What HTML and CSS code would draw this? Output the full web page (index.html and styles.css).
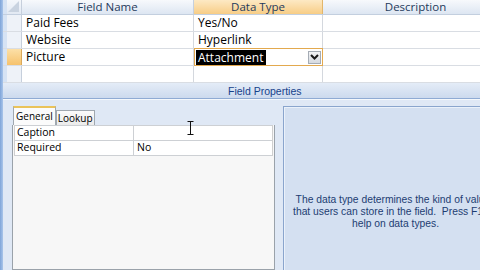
FILE: index.html
```html
<!DOCTYPE html>
<html>
<head>
<meta charset="utf-8">
<link rel="stylesheet" href="styles.css">
</head>
<body>
<div class="app">
  <div class="edge"></div>
  <div class="main">
    <div class="grid">
      <div class="row head">
        <div class="gap"></div>
        <div class="sel corner"><svg width="11" height="11" viewBox="0 0 11 11"><path d="M11 0 L11 11 L0 11 Z" fill="#c9d3e0"/></svg></div>
        <div class="c name">Field Name</div>
        <div class="c type">Data Type</div>
        <div class="c desc">Description</div>
      </div>
      <div class="row">
        <div class="gap"></div><div class="sel"></div>
        <div class="c name">Paid Fees</div>
        <div class="c type">Yes/No</div>
        <div class="c desc"></div>
      </div>
      <div class="row">
        <div class="gap"></div><div class="sel"></div>
        <div class="c name">Website</div>
        <div class="c type">Hyperlink</div>
        <div class="c desc"></div>
      </div>
      <div class="row current">
        <div class="gap"></div><div class="sel"></div>
        <div class="c name">Picture</div>
        <div class="c type active"><span class="hl">Attachment</span><span class="dd"><svg width="9" height="6" viewBox="0 0 9 6"><path d="M1 1 L4.5 4.5 L8 1" fill="none" stroke="#1a1a1a" stroke-width="2"/></svg></span></div>
        <div class="c desc"></div>
      </div>
      <div class="row">
        <div class="gap"></div><div class="sel"></div>
        <div class="c name"></div>
        <div class="c type"></div>
        <div class="c desc"></div>
      </div>
    </div>
    <div class="fpbar"><span>Field Properties</span></div>
    <div class="lower">
      <div class="tabctl">
        <div class="tabs">
          <div class="tab on">General</div>
          <div class="tab">Lookup</div>
        </div>
        <div class="tabbody">
          <div class="props">
            <div class="prow"><div class="pk">Caption</div><div class="pv"></div></div>
            <div class="prow"><div class="pk">Required</div><div class="pv">No</div></div>
          </div>
        </div>
      </div>
      <div class="help">
        <p class="helptext">The data type determines the kind of values<br>that users can store in the field.&nbsp; Press F1 for<br>help on data types.</p>
      </div>
    </div>
  </div>
  <svg class="cursor" width="7" height="14" viewBox="0 0 7 14"><path d="M0.5 0.5 H6.5 M3.5 0.5 V13.5 M0.5 13.5 H6.5" fill="none" stroke="#111" stroke-width="1"/></svg>
</div>
</body>
</html>
```

FILE: styles.css
```css
html, body {
  margin: 0;
  padding: 0;
}
body {
  width: 480px;
  height: 270px;
  overflow: hidden;
  background: #dfe8f5;
  font-family: "Open Sans", "Liberation Sans", sans-serif;
}
.app {
  position: relative;
  display: flex;
  width: 480px;
  height: 270px;
  overflow: hidden;
}
.edge {
  flex: none;
  width: 3px;
  background: linear-gradient(to right, #7ea4d9, #a9c5ea);
}
.main {
  flex: none;
  width: 560px;
  display: flex;
  flex-direction: column;
}
.grid {
  display: flex;
  flex-direction: column;
  background: #fff;
}
.row {
  display: flex;
  height: 17px;
  box-sizing: border-box;
  border-bottom: 1px solid #d9dde3;
  font-size: 12px;
  line-height: 16px;
  color: #000;
}
.row .gap {
  flex: none;
  width: 4px;
  background: #d6e3f4;
}
.row .sel {
  flex: none;
  width: 15px;
  box-sizing: border-box;
  background: #eef2f8;
  border-right: 1px solid #c6cfdc;
}
.row .c {
  flex: none;
  box-sizing: border-box;
  padding-left: 4px;
  white-space: nowrap;
  overflow: hidden;
}
.row .name {
  width: 172px;
  border-right: 1px solid #d4d8de;
}
.row .type {
  width: 129px;
  border-right: 1px solid #d4d8de;
}
.row .desc {
  width: 240px;
}
.row.head {
  height: 15px;
  border-bottom: 1px solid #c3cfdf;
  font-size: 11.5px;
  line-height: 14px;
  color: #1f3a5c;
}
.row.head .c {
  padding-left: 0;
  overflow: visible;
  text-align: center;
  background: linear-gradient(to bottom, #f7f9fc, #dde6f2);
  border-right: 1px solid #c5d0df;
}
.row.head .desc {
  width: 186px;
  text-align: center;
}
.row.head .type {
  background: linear-gradient(to bottom, #fde9c4, #f7cd86);
  border-right: 1px solid #e3b66a;
}
.row.head .sel.corner {
  display: flex;
  align-items: flex-end;
  justify-content: flex-end;
  padding: 0 2px 2px 0;
  background: linear-gradient(to bottom, #f4f7fb, #e2e9f3);
}
.row.current .sel {
  background: linear-gradient(to bottom, #fce0a8, #f6c26c);
  border-right-color: #d9a95c;
}
.row .type.active {
  display: flex;
  align-items: center;
  justify-content: space-between;
  padding: 0 1px 0 1px;
  border: 1px solid #e3a94e;
  margin-top: -1px;
  height: 18px;
}
.hl {
  background: #000;
  color: #fff;
  padding: 0 3px 0 2px;
  line-height: 15px;
  height: 15px;
}
.dd {
  width: 13px;
  height: 13px;
  box-sizing: border-box;
  border: 1px solid #a5acb5;
  background: linear-gradient(to bottom, #f3f4f6, #d6dae0);
  display: flex;
  align-items: center;
  justify-content: center;
}
.fpbar {
  height: 16px;
  box-sizing: border-box;
  background: linear-gradient(to bottom, #e4ecf7, #ccdaee);
  border-bottom: 1px solid #8fabd4;
  box-shadow: 0 1px 0 #f4f8fc;
  padding-left: 225px;
  font-family: "Liberation Sans", Arial, sans-serif;
  font-size: 10.5px;
  line-height: 17px;
  color: #15428b;
}
.lower {
  flex: 1;
  display: flex;
  padding-left: 9px;
  padding-top: 1px;
}
.tabctl {
  flex: none;
  width: 263px;
  display: flex;
  flex-direction: column;
  padding-top: 6px;
}
.tabs {
  display: flex;
  align-items: flex-end;
  height: 19px;
  padding-left: 1px;
}
.tab {
  height: 15px;
  box-sizing: border-box;
  border: 1px solid #a0a8b0;
  border-bottom: none;
  background: linear-gradient(to bottom, #fbfbfb, #ebebeb);
  font-size: 10px;
  line-height: 14px;
  padding: 0 1px;
  color: #000;
  white-space: nowrap;
}
.tab.on {
  height: 19px;
  background: #fbfbfb;
  border-top: 2px solid #eac35a;
  line-height: 16px;
  padding: 0 2px;
}
.tabbody {
  flex: 1;
  background: #f7f7f7;
  border: 1px solid #9aa2aa;
  border-top: none;
  padding: 0 1px;
}
.props {
  background: #fff;
  border-left: 1px solid #cfcfcf;
  border-right: 1px solid #cfcfcf;
}
.prow {
  display: flex;
  height: 14px;
  border-top: 1px solid #cdd0d4;
  font-size: 10.5px;
  line-height: 13px;
}
.prow:last-child {
  border-bottom: 1px solid #cdd0d4;
}
.pk {
  width: 119px;
  box-sizing: border-box;
  padding-left: 2px;
  border-right: 1px solid #cdd0d4;
}
.pv {
  padding-left: 3px;
}
.help {
  flex: none;
  width: 224px;
  margin-left: 8px;
  margin-top: 6px;
  box-sizing: border-box;
  background: #d4e0f1;
  border-left: 1px solid #8aa5cd;
  border-top: 1px solid #8aa5cd;
  box-shadow: inset 1px 1px 0 #eaf1fa;
}
.helptext {
  margin: 0;
  padding-top: 87px;
  text-align: center;
  white-space: nowrap;
  font-family: "Liberation Sans", Arial, sans-serif;
  font-size: 10.3px;
  line-height: 12px;
  color: #1d3d72;
}
.cursor {
  position: absolute;
  left: 187px;
  top: 121px;
}
```
